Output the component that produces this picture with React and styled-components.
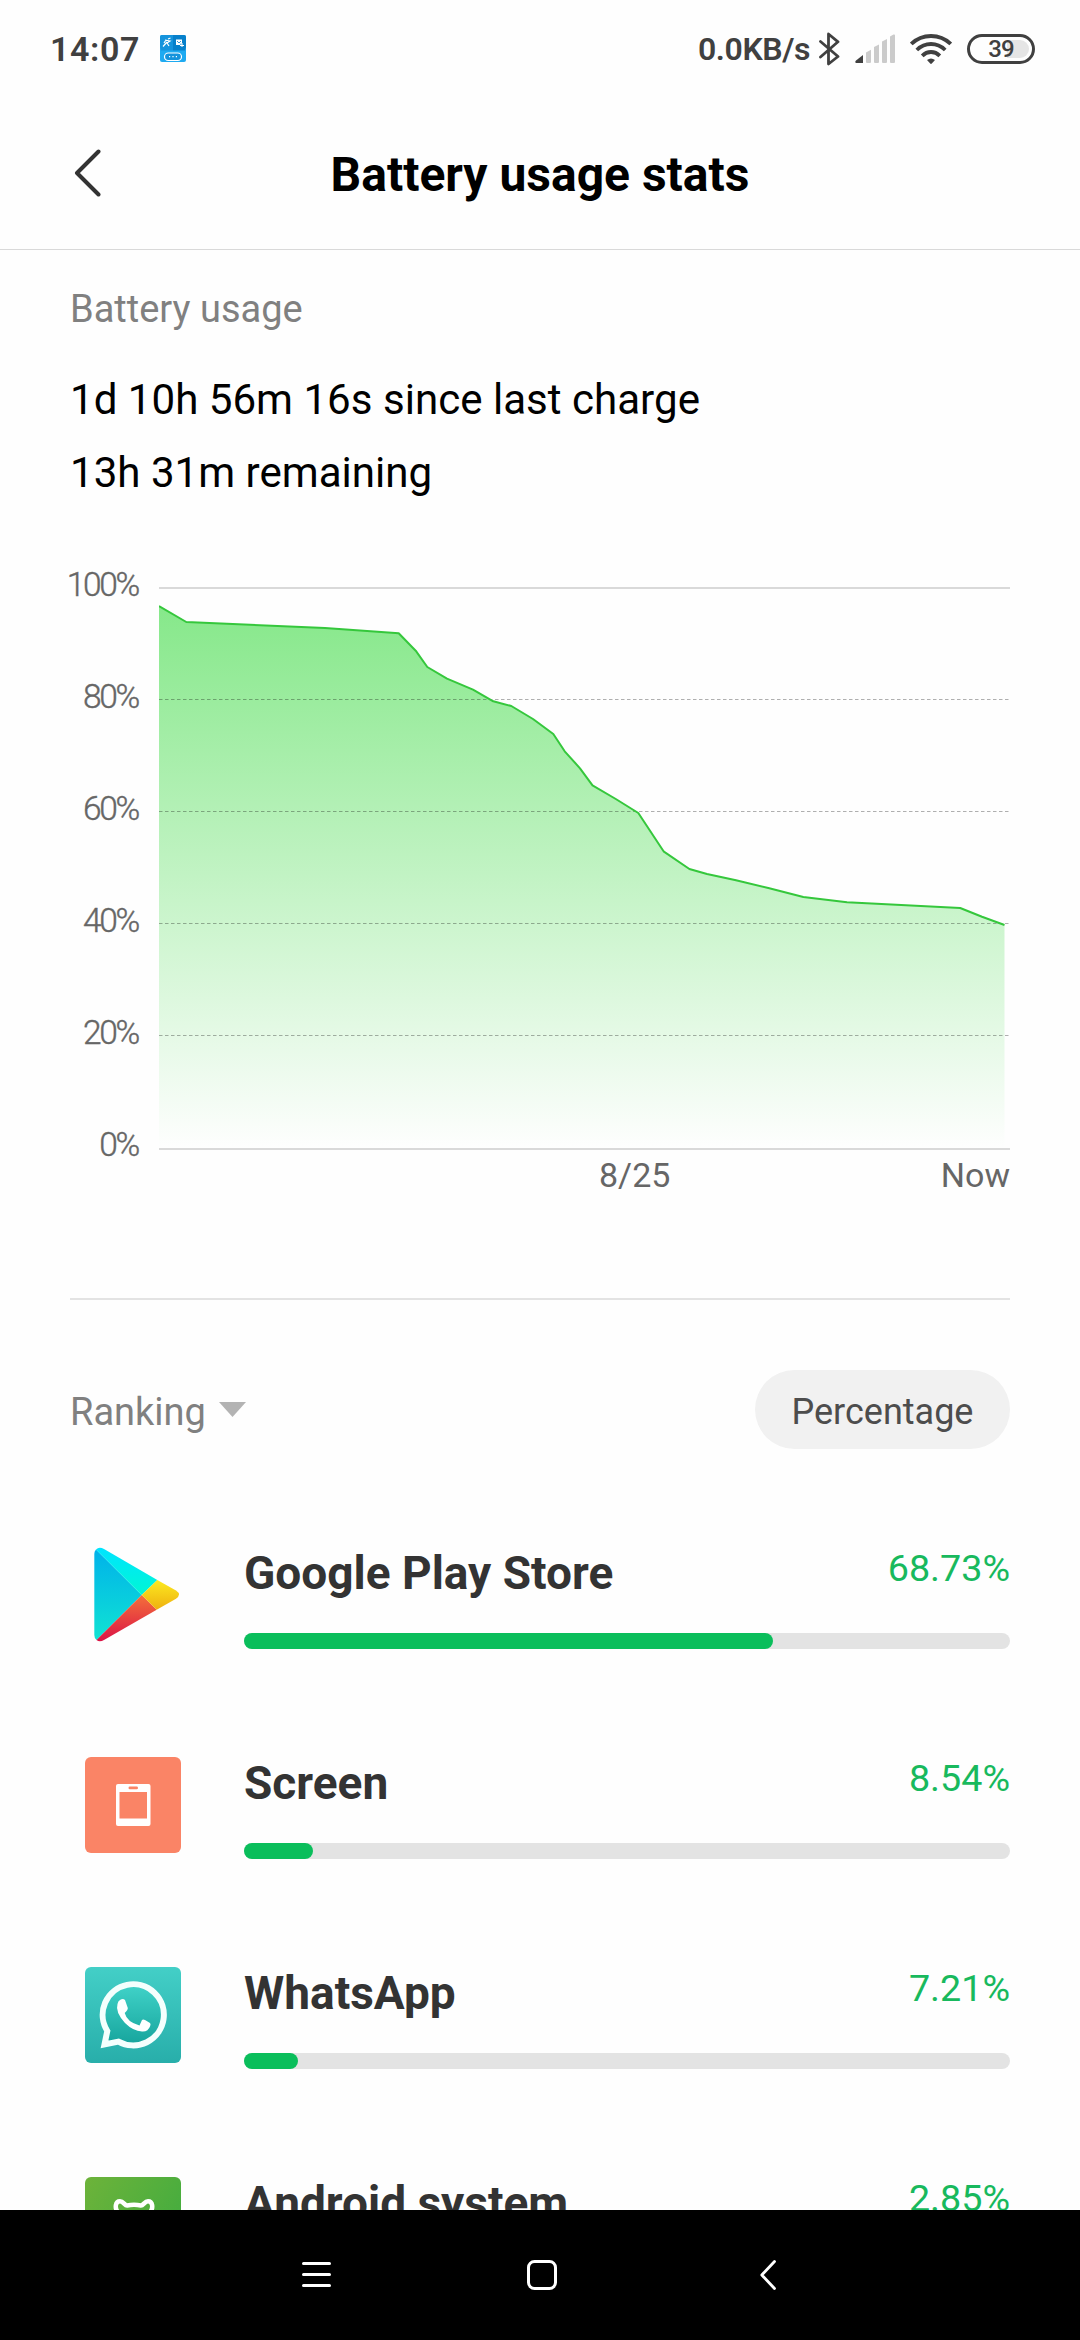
import styled, { createGlobalStyle } from "styled-components";

const apps = [
  { name: "Google Play Store", usage: "68.73%", Icon: PlayIcon },
  { name: "Screen", usage: "8.54%", Icon: ScreenIcon },
  { name: "WhatsApp", usage: "7.21%", Icon: WhatsAppIcon },
  { name: "Android system", usage: "2.85%", Icon: AndroidIcon },
];

const levels = ["100%", "80%", "60%", "40%", "20%", "0%"];

// battery level over time, in plot coordinates
const points = [
  [0, 19], [27.3, 35], [166, 41], [239.7, 46.3], [256.7, 63.7], [268.3, 80],
  [288, 91.7], [314, 102.7], [334.3, 114.3], [352.3, 119], [374, 132],
  [394.3, 147], [405.7, 164.3], [421, 181.3], [433.5, 198.3], [456.8, 212],
  [479.3, 226], [504.9, 264.7], [530.4, 282], [548, 287], [577, 293.3],
  [610.3, 301.3], [644.3, 310], [688, 315.3], [801.2, 321], [823, 329.7],
  [845.5, 338],
];

const line = "M" + points.map((p) => p.join(" ")).join("L");

function BatteryChart() {
  return (
    <Plot viewBox="0 0 851 563">
      <defs>
        <linearGradient id="level" gradientUnits="userSpaceOnUse" x1="0" y1="19" x2="0" y2="561">
          <stop offset="0" stopColor="#86e88a" />
          <stop offset="1" stopColor="#86e88a" stopOpacity="0" />
        </linearGradient>
      </defs>
      <path d={`${line}V561H0Z`} fill="url(#level)" />
      <path
        d="M0 112.5H851M0 224.5H851M0 336.5H851M0 448.5H851"
        stroke="#000"
        strokeOpacity="0.31"
        strokeDasharray="3.5 2.5"
      />
      <path d="M0 1H851M0 562H851" stroke="#d9d9d9" strokeWidth="2" />
      <path d={line} fill="none" stroke="#35c73c" strokeWidth="2" strokeLinejoin="round" />
    </Plot>
  );
}

function NoticeIcon() {
  return (
    <svg width="26" height="27" viewBox="0 0 26 27">
      <rect width="26" height="27" rx="2" fill="#1eaaf1" />
      <path d="M2 0H13V15.500H1L0 12V2Q0 0 2 0Z" fill="#1593dc" />
      <path d="M13 0H24Q26 0 26 2V12L25 15.500H13Z" fill="#0680cb" />
      <path d="M3 11.500L7 7M5 5L10 6L7 8L9 11M8 4L10.500 3M4 8L6 5" stroke="#fff" strokeWidth="1.200" fill="none" />
      <path d="M16 4.500H22V10H16Z" fill="#fff" />
      <path d="M17 6L19 8L21 6M20 9L23.500 10.500M22 8V12" stroke="#0680cb" strokeWidth=".8" fill="none" />
      <path d="M22 8V12M20 10.500H24" stroke="#fff" strokeWidth="1" />
      <rect x="4.500" y="18" width="17" height="7.500" rx="3.750" fill="#1593dc" stroke="#fff" strokeWidth="1.200" />
      <path d="M9 21.700H10.200M12.400 21.700H13.600M15.800 21.700H17" stroke="#fff" strokeWidth="1.200" />
    </svg>
  );
}

function BluetoothIcon() {
  return (
    <svg width="21" height="34" viewBox="0 0 21 34" fill="none" stroke="#404040" strokeWidth="2.800" strokeLinejoin="round" strokeLinecap="round">
      <path d="M1.500 9.500L19 24.500L9.500 32V2L19 9.800L1.500 25" />
    </svg>
  );
}

function SignalIcon() {
  return (
    <svg width="40" height="29" viewBox="0 0 40 29">
      <path d="M8 21V29H1Q-.5 28 1 26.500Z" fill="#404040" />
      <path d="M11 18.500L16 15.800V28Q16 29 15 29H12Q11 29 11 28ZM19 13L24 10.500V28Q24 29 23 29H20Q19 29 19 28ZM27 7.500L32 5V28Q32 29 31 29H28Q27 29 27 28ZM35 2.500L38.500 .5Q40 0 40 1.500V28Q40 29 39 29H36Q35 29 35 28Z" fill="#cbcbcb" />
    </svg>
  );
}

function WifiIcon() {
  return (
    <svg width="42" height="30" viewBox="0 0 42 30" fill="none" stroke="#404040" strokeWidth="3.800">
      <path d="M1.300 10Q9.500 2 21 2T40.700 10" />
      <path d="M6.800 16Q13 10 21 10T35.200 16" />
      <path d="M12.200 21.800Q16 18 21 18T29.800 21.800" />
      <path d="M17 26Q21 23 25 26L21.800 29.500Q21 30.300 20.200 29.500Z" fill="#404040" stroke="none" />
    </svg>
  );
}

function PlayIcon() {
  return (
    <svg width="96" height="96" viewBox="0 0 96 96">
      <defs>
        <linearGradient id="playBlue" x1="0" y1="0" x2="0" y2="1">
          <stop offset="0" stopColor="#00b2ea" />
          <stop offset="1" stopColor="#10e3d3" />
        </linearGradient>
        <linearGradient id="playCyan" x1="0" y1="0" x2="0" y2="1">
          <stop offset="0" stopColor="#00e4ff" />
          <stop offset="1" stopColor="#00f7d4" />
        </linearGradient>
        <linearGradient id="playRed" x1="0" y1="0" x2="0" y2="1">
          <stop offset="0" stopColor="#f4703a" />
          <stop offset="1" stopColor="#db1346" />
        </linearGradient>
        <linearGradient id="playYellow" x1="0" y1="0" x2="0" y2="1">
          <stop offset="0" stopColor="#fcea20" />
          <stop offset="1" stopColor="#eeb010" />
        </linearGradient>
      </defs>
      <path d="M11 2.500Q9.300 4 9.300 7V88Q9.300 91 11.500 93L56.700 48Z" fill="url(#playBlue)" />
      <path d="M11 2.500Q14 -.5 19 2L72.300 33L56.700 48Z" fill="url(#playCyan)" />
      <path d="M11.500 93Q14.500 95.500 19 93L71.700 62.700L56.700 48Z" fill="url(#playRed)" />
      <path d="M72.300 33L91 43.500Q97 47.500 91 51.700L71.700 62.700L56.700 48Z" fill="url(#playYellow)" />
    </svg>
  );
}

function ScreenIcon() {
  return (
    <svg width="96" height="96" viewBox="0 0 96 96">
      <rect width="96" height="96" rx="6" fill="#fa8466" />
      <rect x="31" y="27" width="34.500" height="42" rx="2" fill="#fff" />
      <rect x="34.500" y="35" width="27.500" height="26.500" fill="#fa8466" />
      <rect x="43.500" y="29.500" width="9.500" height="2.800" rx="1.400" fill="#fa8466" />
    </svg>
  );
}

function WhatsAppIcon() {
  return (
    <svg width="96" height="96" viewBox="0 0 96 96">
      <defs>
        <linearGradient id="waTile" x1="0" y1="0" x2="0" y2="1">
          <stop offset="0" stopColor="#43cfc7" />
          <stop offset="1" stopColor="#28aeaa" />
        </linearGradient>
        <linearGradient id="waBubble" x1="0" y1="0" x2="0" y2="1">
          <stop offset="0" stopColor="#41d3c9" />
          <stop offset="1" stopColor="#16a49c" />
        </linearGradient>
      </defs>
      <rect width="96" height="96" rx="6" fill="url(#waTile)" />
      <path
        d="M22.300 64A30.600 30.600 0 1 1 33.500 74.600L19.500 77.500Z"
        fill="url(#waBubble)"
        stroke="#f4fffd"
        strokeWidth="6"
      />
      <path
        d="M35 33Q38 31 40 33L42.800 41Q43 43 39.700 46Q42 55 54.500 58.500L57 53Q58 52 60 53L65 56Q66 57 65.200 59Q63 65 57 64.500Q48 64 40 56Q30 45 32.500 37Q33 34 35 33Z"
        fill="#fff"
      />
    </svg>
  );
}

function AndroidIcon() {
  return (
    <svg width="96" height="96" viewBox="0 0 96 96">
      <defs>
        <linearGradient id="androidTile" x1="0" y1="0" x2="1" y2=".6">
          <stop offset="0" stopColor="#6db33a" />
          <stop offset="1" stopColor="#43ac3f" />
        </linearGradient>
      </defs>
      <rect width="96" height="96" rx="6" fill="url(#androidTile)" />
      <path
        d="M33.500 36C29 31 30.500 24.200 35 24.200C38.500 24.200 39.500 28.500 42 28.500Q49 27 56 28.500C58.500 28.500 59.500 24.200 63 24.200C67.500 24.200 69 31 64.500 36V66H33.500Z"
        fill="none"
        stroke="#fff"
        strokeWidth="4.500"
      />
    </svg>
  );
}

const App = () => {
  return (
    <Screen>
      <GlobalStyle />
      <StatusBar>
        <Clock>14:07</Clock>
        <NoticeIcon />
        <StatusIcons>
          <Speed>0.0KB/s</Speed>
          <BluetoothIcon />
          <SignalIcon />
          <WifiIcon />
          <Battery>
            <span>39</span>
          </Battery>
        </StatusIcons>
      </StatusBar>

      <Header>
        <svg width="27" height="50" viewBox="0 0 27 50" fill="none" stroke="#333" strokeWidth="4" strokeLinecap="round">
          <path d="M24.500 3.500L3 25L24.500 46.500" strokeLinejoin="round" />
        </svg>
        <h1>Battery usage stats</h1>
      </Header>

      <Content>
        <SectionLabel>Battery usage</SectionLabel>
        <Summary>
          <p>1d 10h 56m 16s since last charge</p>
          <p>13h 31m remaining</p>
        </Summary>

        <Chart>
          <YAxis>
            {levels.map((level) => (
              <span key={level}>{level}</span>
            ))}
          </YAxis>
          <div>
            <BatteryChart />
            <XAxis>
              <span>8/25</span>
              <span>Now</span>
            </XAxis>
          </div>
        </Chart>

        <Divider />

        <RankingBar>
          <SectionLabel as="h2">Ranking</SectionLabel>
          <svg width="27" height="15" viewBox="0 0 27 15">
            <path d="M0 0H27L13.500 15Z" fill="#b3b3b3" />
          </svg>
          <Pill>Percentage</Pill>
        </RankingBar>

        <AppList>
          {apps.map(({ name, usage, Icon }) => (
            <AppRow key={name}>
              <Icon />
              <AppInfo>
                <AppTitle>
                  <h3>{name}</h3>
                  <span>{usage}</span>
                </AppTitle>
                <Track>
                  <Fill style={{ width: `${Math.round(parseFloat(usage))}%` }} />
                </Track>
              </AppInfo>
            </AppRow>
          ))}
        </AppList>
      </Content>

      <NavBar>
        <svg width="30" height="30" viewBox="0 0 30 30" stroke="#fff" strokeWidth="3" strokeLinecap="round">
          <path d="M2.500 3.500H28.500M2.500 14.500H28.500M2.500 25.500H28.500" />
        </svg>
        <svg width="30" height="30" viewBox="0 0 30 30">
          <rect x="1.500" y="1.500" width="27" height="27" rx="6" fill="none" stroke="#fff" strokeWidth="3" />
        </svg>
        <svg width="30" height="30" viewBox="0 0 30 30" fill="none" stroke="#fff" strokeWidth="2.800" strokeLinecap="round" strokeLinejoin="round">
          <path d="M21.500 1.500L8.800 15L21.500 28.500" />
        </svg>
      </NavBar>
    </Screen>
  );
};

const GlobalStyle = createGlobalStyle`
  * {
    box-sizing: border-box;
  }
  body {
    margin: 0;
    background: #fefefe;
    font-family: Roboto, sans-serif;
  }
  h1, h2, h3, p, ul {
    margin: 0;
    padding: 0;
  }
  svg {
    display: block;
    flex-shrink: 0;
  }
`;

const Screen = styled.main`
  display: flex;
  flex-direction: column;
  width: 1080px;
  height: 2340px;
  overflow: hidden;
  background: #fefefe;
`;

const StatusBar = styled.div`
  display: flex;
  align-items: center;
  flex-shrink: 0;
  height: 97px;
  padding: 0 45px 0 50px;
  color: #404040;
`;

const Clock = styled.span`
  width: 110px;
  font-size: 34px;
  font-weight: 600;
  line-height: 40px;
  padding-top: 1px;
  letter-spacing: 0.6px;
`;

const StatusIcons = styled.div`
  display: flex;
  align-items: center;
  gap: 15px;
  margin-left: auto;
`;

const Speed = styled.span`
  margin-right: -6px;
  padding-top: 1px;
  font-size: 32px;
  font-weight: 600;
  line-height: 40px;
  letter-spacing: -0.4px;
`;

const Battery = styled.div`
  width: 68px;
  height: 30px;
  padding: 3px;
  border: 3px solid #404040;
  border-radius: 15px;

  span {
    display: block;
    height: 18px;
    border-radius: 9px;
    background: linear-gradient(90deg, transparent 60%, #e5e5e5 60%);
    font-size: 24px;
    font-weight: 500;
    line-height: 19px;
    letter-spacing: -1px;
    text-align: center;
  }
`;

const Header = styled.header`
  display: grid;
  grid-template-columns: 27px 1fr 27px;
  align-items: center;
  flex-shrink: 0;
  height: 153px;
  padding: 0 74px;
  border-bottom: 1px solid #d9d9d9;

  h1 {
    padding-top: 4px;
    color: #000;
    font-size: 48px;
    font-weight: 700;
    line-height: 60px;
    text-align: center;
  }
`;

const Content = styled.div`
  flex: 1;
  min-height: 0;
  padding: 34px 70px 0;
  overflow: hidden;
`;

const SectionLabel = styled.h2`
  color: #808080;
  font-size: 38px;
  font-weight: 400;
  line-height: 50px;
`;

const Summary = styled.div`
  margin-top: 29px;
  color: #000;
  font-size: 42.1px;
  line-height: 73px;
`;

const Chart = styled.div`
  display: grid;
  grid-template-columns: 69px 851px;
  column-gap: 20px;
  height: 630px;
  margin-top: 56px;
  color: #666;
  font-size: 34px;
  line-height: 40px;
`;

const YAxis = styled.div`
  display: flex;
  flex-direction: column;
  align-items: flex-end;
  justify-content: space-between;
  height: 600px;
  padding-right: 1px;
  font-size: 33.5px;
  font-weight: 300;
  letter-spacing: -2.3px;
  -webkit-text-stroke: 0.4px #666;
`;

const Plot = styled.svg`
  width: 851px;
  height: 563px;
  margin-top: 22px;
`;

const XAxis = styled.div`
  display: flex;
  justify-content: space-between;
  margin-top: 5px;
  padding-left: 440px;
`;

const Divider = styled.div`
  height: 2px;
  margin-top: 103px;
  background: #e3e3e3;
`;

const RankingBar = styled.div`
  display: flex;
  align-items: center;
  gap: 13px;
  height: 79px;
  margin-top: 70px;

  h2 {
    padding-top: 4px;
  }
`;

const Pill = styled.button`
  width: 255px;
  height: 79px;
  margin-left: auto;
  padding: 4px 0 0;
  border: none;
  border-radius: 40px;
  background: #f1f1f1;
  color: #4d4d4d;
  font: 400 36px Roboto, sans-serif;
`;

const AppList = styled.ul`
  margin-top: 98px;
`;

const AppRow = styled.li`
  display: flex;
  gap: 63px;
  height: 210px;
  padding-left: 15px;
`;

const AppInfo = styled.div`
  flex: 1;
`;

const AppTitle = styled.div`
  display: flex;
  justify-content: space-between;

  h3 {
    color: #333;
    font-size: 46px;
    font-weight: 700;
    line-height: 52px;
  }
  span {
    color: #18b95d;
    font-size: 37.7px;
    line-height: 42px;
  }
`;

const Track = styled.div`
  height: 16px;
  margin-top: 34px;
  border-radius: 8px;
  background: #e3e3e3;
`;

const Fill = styled.div`
  height: 100%;
  border-radius: 8px;
  background: #0abe5b;
`;

const NavBar = styled.nav`
  display: flex;
  align-items: center;
  justify-content: space-between;
  flex-shrink: 0;
  height: 130px;
  padding: 0 297px 0 301px;
  background: #000;
`;

export default App;
